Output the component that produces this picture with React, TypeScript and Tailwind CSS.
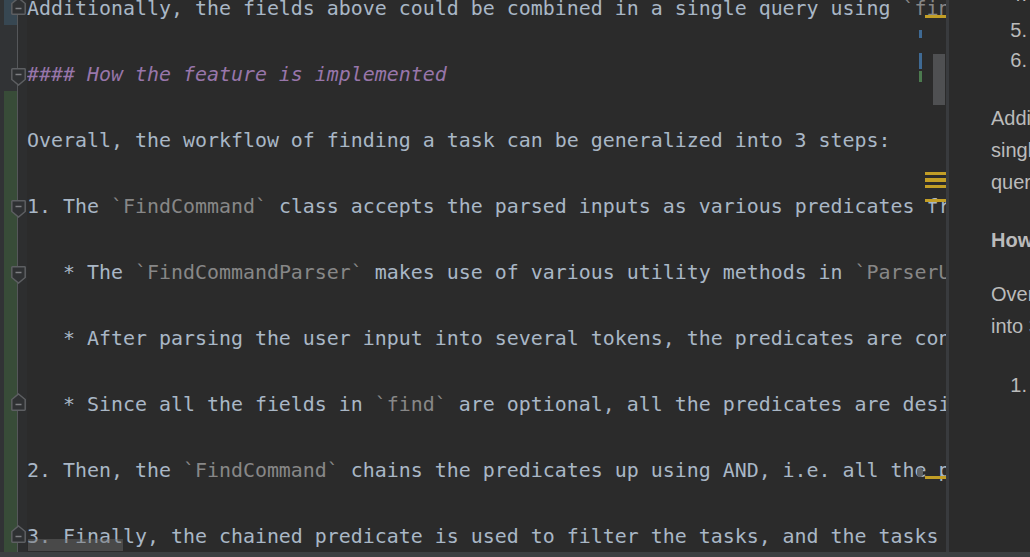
import React from 'react';

type Seg = { t: string; code?: boolean };
type Line = {
  segs: Seg[];
  heading?: boolean;
  fold?: 'start' | 'end';
  stripe?: 'mod' | 'add';
};

const lines: Line[] = [
  {
    segs: [
      { t: 'Additionally, the fields above could be combined in a single query using ' },
      { t: '`find`', code: true },
      { t: ' with several prefixes.' },
    ],
    fold: 'end',
    stripe: 'mod',
  },
  { segs: [] },
  { segs: [{ t: '#### How the feature is implemented' }], heading: true, fold: 'start' },
  { segs: [], stripe: 'add' },
  {
    segs: [{ t: 'Overall, the workflow of finding a task can be generalized into 3 steps:' }],
    stripe: 'add',
  },
  { segs: [], stripe: 'add' },
  {
    segs: [
      { t: '1. The ' },
      { t: '`FindCommand`', code: true },
      { t: ' class accepts the parsed inputs as various predicates from the parser.' },
    ],
    fold: 'start',
    stripe: 'add',
  },
  { segs: [], stripe: 'add' },
  {
    segs: [
      { t: '   * The ' },
      { t: '`FindCommandParser`', code: true },
      { t: ' makes use of various utility methods in ' },
      { t: '`ParserUtil`', code: true },
      { t: '.' },
    ],
    fold: 'start',
    stripe: 'add',
  },
  { segs: [], stripe: 'add' },
  {
    segs: [
      { t: '   * After parsing the user input into several tokens, the predicates are constructed.' },
    ],
    stripe: 'add',
  },
  { segs: [], stripe: 'add' },
  {
    segs: [
      { t: '   * Since all the fields in ' },
      { t: '`find`', code: true },
      { t: ' are optional, all the predicates are designed to be optional.' },
    ],
    fold: 'end',
    stripe: 'add',
  },
  { segs: [], stripe: 'add' },
  {
    segs: [
      { t: '2. Then, the ' },
      { t: '`FindCommand`', code: true },
      { t: ' chains the predicates up using AND, i.e. all the predicates must match.' },
    ],
    stripe: 'add',
  },
  { segs: [], stripe: 'add' },
  {
    segs: [
      { t: '3. Finally, the chained predicate is used to filter the tasks, and the tasks are shown.' },
    ],
    fold: 'end',
    stripe: 'add',
  },
];

function FoldMarker({ dir }: { dir: 'start' | 'end' }) {
  if (dir === 'start') {
    return (
      <svg
        className="absolute left-[11px] top-[10px]"
        width="15"
        height="18"
        viewBox="0 0 15 18"
      >
        <path
          d="M1.5 0.8 H13.5 Q14.2 0.8 14.2 1.5 V11.5 L7.5 17 L0.8 11.5 V1.5 Q0.8 0.8 1.5 0.8 Z"
          fill="#2f3133"
          stroke="#5d5f62"
          strokeWidth="1.5"
        />
        <path d="M4.5 6.5 H10.5" stroke="#7d7f82" strokeWidth="1.5" />
      </svg>
    );
  }
  return (
    <svg className="absolute left-[11px] top-[5px]" width="15" height="18" viewBox="0 0 15 18">
      <path
        d="M7.5 1 L14.2 6.5 V16.5 Q14.2 17.2 13.5 17.2 H1.5 Q0.8 17.2 0.8 16.5 V6.5 Z"
        fill="#2f3133"
        stroke="#5d5f62"
        strokeWidth="1.5"
      />
      <path d="M4.5 11.5 H10.5" stroke="#7d7f82" strokeWidth="1.5" />
    </svg>
  );
}

function EditorRow({ line }: { line: Line }) {
  const stripe =
    line.stripe === 'mod' ? 'bg-[#374752]' : line.stripe === 'add' ? 'bg-[#384c38]' : 'bg-[#313335]';
  return (
    <div className="flex h-[33px] shrink-0">
      <div className="relative flex w-[27px] shrink-0">
        <div className="w-[4px] bg-[#313335]" />
        <div className={`w-[13px] ${stripe}`} />
        <div className="w-px bg-[#55575a]" />
        <div className="flex-1 bg-[#2d2e2f]" />
        {line.fold && <FoldMarker dir={line.fold} />}
      </div>
      <div
        className={`whitespace-pre leading-[33px] ${
          line.heading ? 'italic text-[#9876aa]' : 'text-[#a9b7c6]'
        }`}
      >
        {line.segs.map((s, i) => (
          <span key={i} className={s.code ? 'text-[#878787]' : ''}>
            {s.t}
          </span>
        ))}
      </div>
    </div>
  );
}

function Editor() {
  return (
    <div className="relative w-[946px] shrink-0 overflow-hidden bg-[#2b2b2b] font-['DejaVu_Sans_Mono',monospace] text-[19.93px]">
      <div className="-mt-[8px] flex flex-col">
        {lines.map((l, i) => (
          <EditorRow key={i} line={l} />
        ))}
      </div>

      {/* error stripe markers */}
      <div className="absolute left-[925px] top-[15px] h-[3px] w-[21px] bg-[#c29e26]" />
      <div className="absolute left-[925px] top-[172px] h-[3px] w-[21px] bg-[#c29e26]" />
      <div className="absolute left-[925px] top-[178px] h-[4px] w-[21px] bg-[#c29e26]" />
      <div className="absolute left-[925px] top-[185px] h-[3px] w-[21px] bg-[#c29e26]" />
      <div className="absolute left-[925px] top-[199px] h-[3px] w-[21px] bg-[#c29e26]" />
      <div className="absolute left-[917px] top-[468px] h-[9px] w-[6px] rounded-full bg-[#5f6163]" />
      <div className="absolute left-[925px] top-[476px] h-[3px] w-[21px] bg-[#c29e26]" />
      <div className="absolute left-[919px] top-[30px] h-[8px] w-[3px] bg-[#3f6a94]" />
      <div className="absolute left-[919px] top-[53px] h-[16px] w-[3px] bg-[#3f6a94]" />
      <div className="absolute left-[919px] top-[71px] h-[11px] w-[3px] bg-[#4c7a4f]" />

      {/* vertical scrollbar thumb */}
      <div className="absolute left-[933px] top-[54px] h-[51px] w-[12px] bg-[#4f5052]" />
      {/* horizontal scrollbar thumb */}
      <div className="absolute left-[28px] top-[539px] h-[12px] w-[95px] bg-[rgba(110,110,110,0.45)]" />
    </div>
  );
}

function Preview() {
  const Num = ({ n, text, extra = '' }: { n: string; text: string; extra?: string }) => (
    <div className={`flex h-[30px] shrink-0 items-center whitespace-nowrap ${extra}`}>
      <span className="w-[36px] shrink-0 text-right">{n}</span>
      <span className="shrink-0 pl-[14px]">{text}</span>
    </div>
  );
  return (
    <div className="flex-1 overflow-hidden bg-[#2b2b2b] font-['Liberation_Sans',Arial,sans-serif] text-[20px] text-[#bbbbbb]">
      <div className="-mt-[21px] flex flex-col pl-[42px]">
        <Num n="4." text="Status" />
        <Num n="5." text="Tags" extra="mt-[6px]" />
        <Num n="6." text="Priority" />
        <div className="mt-[27px] flex flex-col whitespace-nowrap leading-[32px]">
          <div>Additionally, the fields above could be combined in a</div>
          <div>single</div>
          <div>query using find.</div>
        </div>
        <div className="mt-[26px] whitespace-nowrap font-bold leading-[32px]">
          How the feature is implemented
        </div>
        <div className="mt-[22px] flex flex-col whitespace-nowrap leading-[32px]">
          <div>Overall, the workflow of finding a task can be generalized</div>
          <div>into 3 steps:</div>
        </div>
        <div className="mt-[27px] flex h-[32px] items-center whitespace-nowrap">
          <span className="w-[36px] shrink-0 text-right">1.</span>
          <span className="shrink-0 pl-[14px]">The FindCommand class accepts the parsed inputs</span>
        </div>
      </div>
    </div>
  );
}

export default function App() {
  return (
    <div className="flex h-[557px] w-[1030px] flex-col overflow-hidden bg-[#2b2b2b]">
      <div className="flex h-[552px] shrink-0">
        <Editor />
        <div className="w-[3px] shrink-0 bg-[#393b3e]" />
        <Preview />
      </div>
      <div className="h-[5px] shrink-0 bg-[#3c3f41]" />
    </div>
  );
}
